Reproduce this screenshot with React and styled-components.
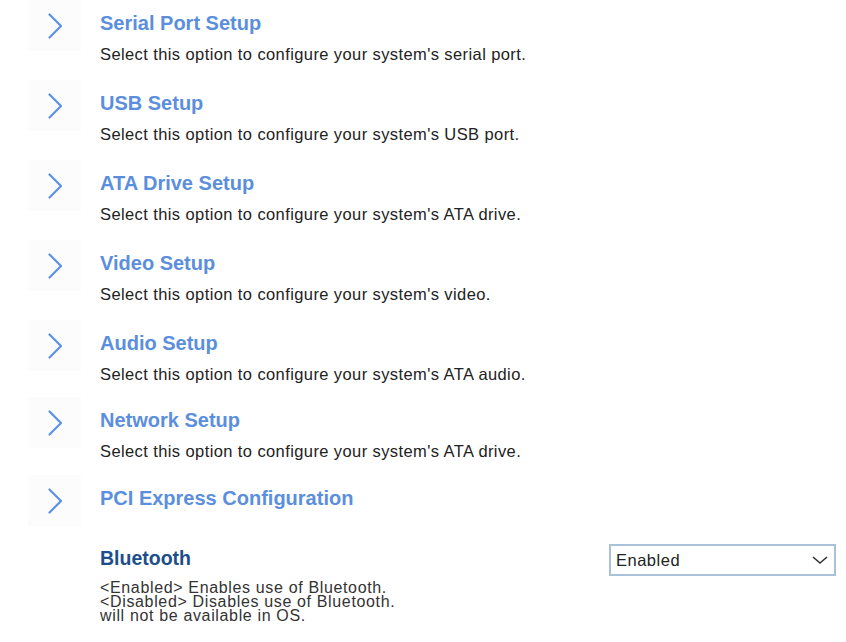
import styled, { createGlobalStyle } from 'styled-components'

const Global = createGlobalStyle`
  html, body { margin: 0; padding: 0; background: #fff; }
  body { font-family: "Liberation Sans", Arial, sans-serif; }
`

const Page = styled.div`
  width: 846px;
  height: 642px;
  overflow: hidden;
  padding-left: 28px;
  box-sizing: border-box;
`

const Row = styled.div`
  display: flex;
  align-items: flex-start;
  gap: 19px;
  height: ${p => p.$pitch}px;
`

const ChevronBox = styled.div`
  width: 53px;
  height: 51px;
  background: #fcfcfd;
  display: flex;
  align-items: center;
  justify-content: center;
  flex-shrink: 0;
`

const Texts = styled.div`
  padding-top: 11px;
  display: flex;
  flex-direction: column;
  gap: 8px;
`

const Title = styled.div`
  font-size: 20px;
  line-height: 24px;
  font-weight: bold;
  color: #5b8fdd;
`

const Desc = styled.div`
  font-size: 16.5px;
  letter-spacing: 0.4px;
  line-height: 22px;
  color: #222;
`

const Setting = styled.div`
  display: flex;
  align-items: flex-start;
  justify-content: space-between;
  padding-left: 72px;
  padding-right: 10px;
  margin-top: 39px;
`

const SettingInfo = styled.div`
  display: flex;
  flex-direction: column;
  gap: 12px;
  padding-top: 3px;
`

const SettingTitle = styled.div`
  font-size: 19.5px;
  line-height: 22px;
  font-weight: bold;
  color: #1d4e8c;
`

const Help = styled.div`
  font-size: 16px;
  letter-spacing: 0.65px;
  line-height: 14px;
  color: #333;
`

const Select = styled.div`
  width: 227px;
  height: 32px;
  box-sizing: border-box;
  border: 2px solid #a9c1da;
  display: flex;
  align-items: center;
  justify-content: space-between;
  padding: 0 5px 0 5px;
  font-size: 16.5px;
  letter-spacing: 0.5px;
  color: #222;
`

const Chevron = () => (
  <svg width="16" height="28" viewBox="0 0 16 28">
    <path d="M2.5 2.5 L14 14 L2.5 25.5" fill="none" stroke="#5b92e8" strokeWidth="2.2" strokeLinecap="round" strokeLinejoin="round" />
  </svg>
)

const Caret = () => (
  <svg width="18" height="10" viewBox="0 0 18 10">
    <path d="M2 2 L9 8 L16 2" fill="none" stroke="#333" strokeWidth="1.6" />
  </svg>
)

const items = [
  { title: 'Serial Port Setup', desc: "Select this option to configure your system's serial port.", pitch: 80 },
  { title: 'USB Setup', desc: "Select this option to configure your system's USB port.", pitch: 80 },
  { title: 'ATA Drive Setup', desc: "Select this option to configure your system's ATA drive.", pitch: 80 },
  { title: 'Video Setup', desc: "Select this option to configure your system's video.", pitch: 80 },
  { title: 'Audio Setup', desc: "Select this option to configure your system's ATA audio.", pitch: 77 },
  { title: 'Network Setup', desc: "Select this option to configure your system's ATA drive.", pitch: 78 },
  { title: 'PCI Express Configuration', pitch: 30 },
]

export default function App() {
  return (
    <Page>
      <Global />
      {items.map(it => (
        <Row key={it.title} $pitch={it.pitch}>
          <ChevronBox><Chevron /></ChevronBox>
          <Texts>
            <Title>{it.title}</Title>
            {it.desc && <Desc>{it.desc}</Desc>}
          </Texts>
        </Row>
      ))}
      <Setting>
        <SettingInfo>
          <SettingTitle>Bluetooth</SettingTitle>
          <Help>
            &lt;Enabled&gt; Enables use of Bluetooth.<br />
            &lt;Disabled&gt; Disables use of Bluetooth.<br />
            will not be available in OS.
          </Help>
        </SettingInfo>
        <Select>
          <span>Enabled</span>
          <Caret />
        </Select>
      </Setting>
    </Page>
  )
}
